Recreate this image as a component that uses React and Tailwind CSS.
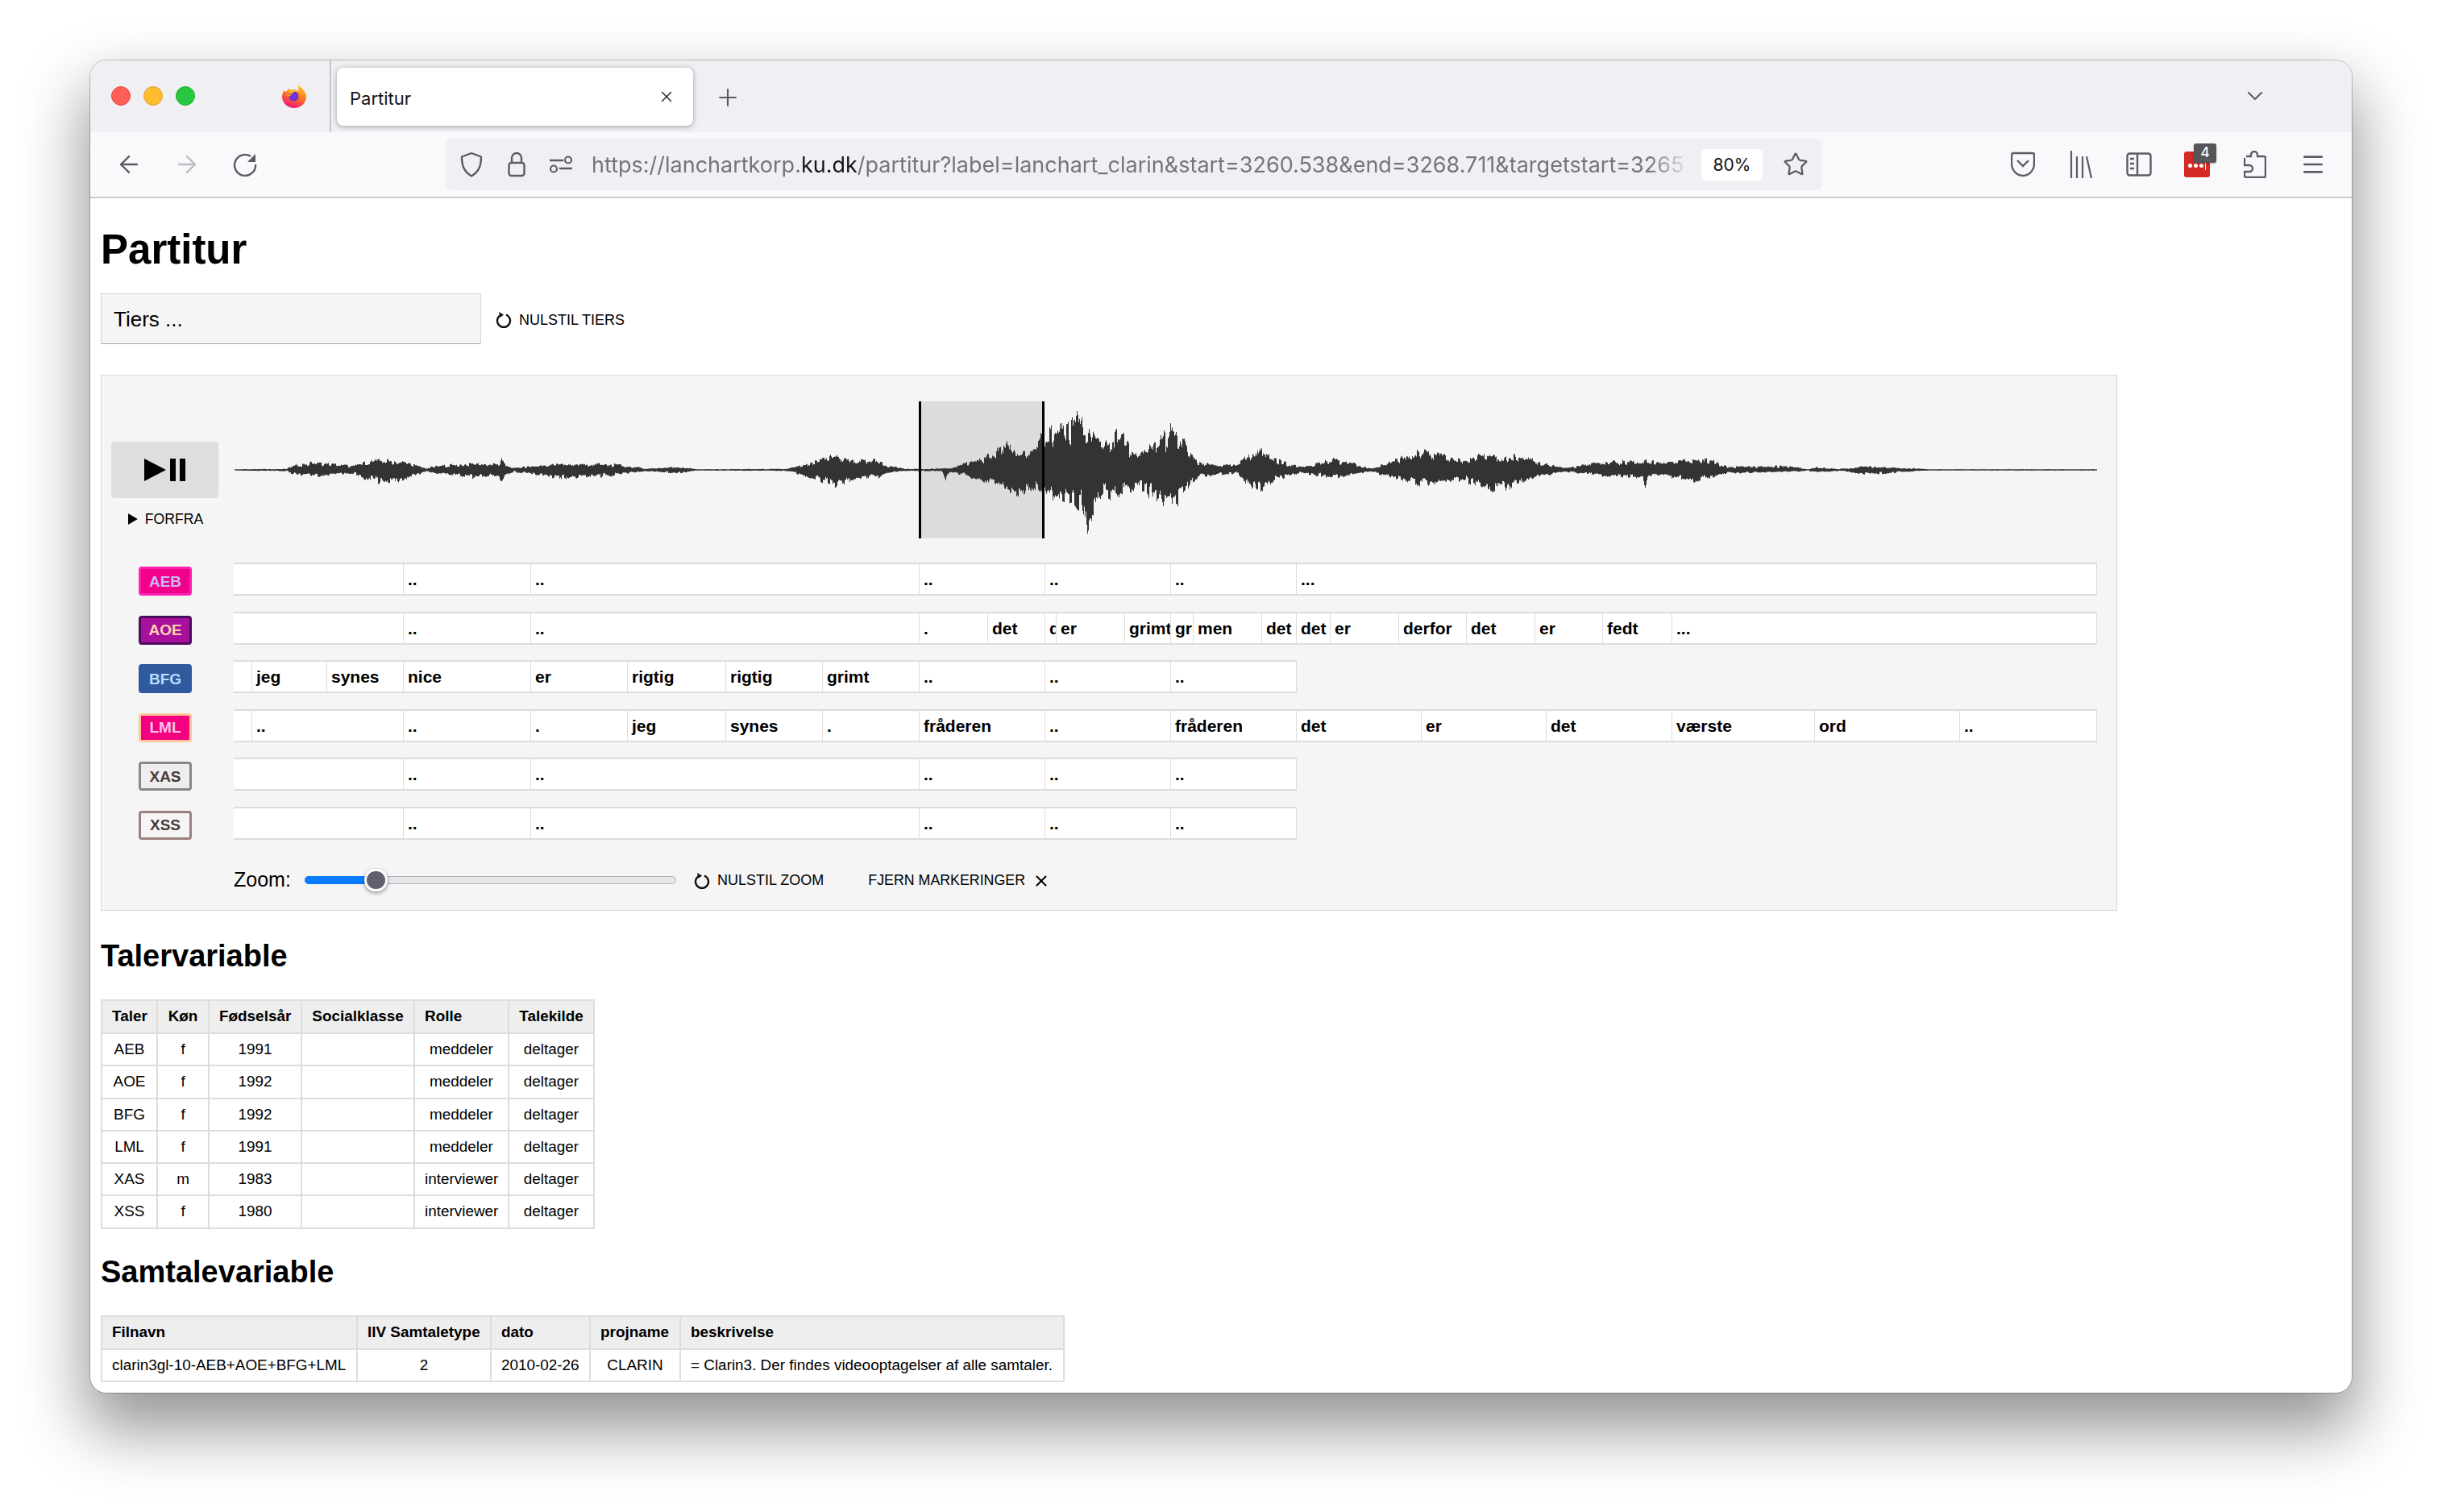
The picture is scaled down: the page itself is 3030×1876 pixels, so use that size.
import {
  Plus,
  X,
  ChevronDown,
  ArrowLeft,
  ArrowRight,
  Star,
  Menu,
} from "lucide-react";

const ARIAL = "font-['Liberation_Sans',Arial,sans-serif]";
const UI = "font-['Inter',sans-serif]";

// [x, top amplitude, bottom amplitude]
const ENVELOPE = [
  [291, 1, 1], [355, 1.5, 2], [362, 6, 6], [388, 12, 10], [439, 6, 6], [458, 14, 16], [477, 15, 19],
  [503, 12, 15], [528, 2.5, 2.5], [541, 6, 6], [585, 10, 12], [618, 9, 9], [622, 17, 18], [626, 8, 8],
  [637, 3, 3], [688, 9, 12], [739, 9, 12], [767, 8, 7], [802, 2, 2], [841, 5, 5], [866, 1, 1],
  [974, 1.5, 1.5], [1000, 8, 10], [1038, 24, 25], [1057, 14, 14], [1089, 16, 12], [1100, 6, 5],
  [1125, 1.5, 1.5], [1168, 2, 2], [1173, 3, 15], [1178, 3, 4], [1196, 10, 8], [1227, 22, 22],
  [1247, 40, 30], [1259, 30, 42], [1285, 30, 30], [1294, 60, 35], [1304, 65, 45], [1342, 75, 55],
  [1349, 60, 83], [1368, 45, 40], [1390, 55, 40], [1412, 20, 25], [1451, 62, 62], [1470, 40, 35],
  [1486, 10, 10], [1534, 7, 5], [1558, 35, 33], [1585, 15, 15], [1610, 5, 5], [1658, 17, 12],
  [1700, 2, 2], [1715, 8, 8], [1754, 28, 20], [1779, 25, 23], [1814, 15, 15], [1852, 27, 35],
  [1903, 14, 12], [1942, 3, 3], [1993, 13, 10], [2038, 13, 12], [2041, 14, 30], [2044, 13, 10],
  [2050, 13, 8], [2105, 15, 17], [2121, 15, 13], [2143, 5, 5], [2217, 6, 4], [2243, 1, 1],
  [2252, 4, 4], [2283, 1.5, 1.5], [2319, 6, 7], [2377, 2, 2], [2395, 1, 1], [2601, 1, 1],
];

const rand = (i) => {
  const s = Math.sin(i * 12.9898) * 43758.5453;
  return s - Math.floor(s);
};

const amplitude = (x, index) => {
  const k = ENVELOPE.findIndex((p) => p[0] > x);
  if (k <= 0) return 1;
  const a = ENVELOPE[k - 1];
  const b = ENVELOPE[k];
  const t = (x - a[0]) / (b[0] - a[0]);
  return a[index] + (b[index] - a[index]) * t;
};

const jagged = (x) => 0.38 + 0.62 * (0.72 * rand(Math.floor(x / 3)) + 0.28 * rand(x));

// waveform columns in a 2312 x 170 box, x starts at 290
const wavePath = () => {
  let d = "";
  for (let x = 291; x <= 2601; x++) {
    const top = amplitude(x, 1) * jagged(x);
    const bottom = amplitude(x, 2) * jagged(x + 5003);
    d += `M${x - 290 + 0.5} ${(85 - Math.max(top, 0.7)).toFixed(1)}V${(85 + Math.max(bottom, 0.7)).toFixed(1)}`;
  }
  return d;
};

const TIERS = [
  {
    name: "AEB",
    badge: "bg-[#f2008a] border-[#ff20b0] text-[#cdb8f5]",
    cuts: [290, 500, 658, 1140, 1296, 1452, 1608, 2602],
    words: ["", "..", "..", "..", "..", "..", "..."],
  },
  {
    name: "AOE",
    badge: "bg-[#a80f9c] border-[#4b0b5e] text-[#ffd0b0]",
    cuts: [290, 500, 658, 1140, 1225, 1296, 1310, 1395, 1452, 1480, 1565, 1608, 1650, 1735, 1819, 1904, 1988, 2074, 2602],
    words: ["", "..", "..", ".", "det", "det", "er", "grimt", "grimt", "men", "det", "det", "er", "derfor", "det", "er", "fedt", "..."],
  },
  {
    name: "BFG",
    badge: "bg-[#2f5a9e] border-[#2f5a9e] text-[#bcdcff]",
    cuts: [290, 312, 405, 500, 658, 778, 900, 1020, 1140, 1296, 1452, 1609],
    words: ["", "jeg", "synes", "nice", "er", "rigtig", "rigtig", "grimt", "..", "..", ".."],
  },
  {
    name: "LML",
    badge: "bg-[#f2007f] border-[#ffc79a] text-[#ffc4ea]",
    cuts: [290, 312, 500, 658, 778, 900, 1020, 1140, 1296, 1452, 1608, 1763, 1918, 2074, 2251, 2431, 2602],
    words: ["", "..", "..", ".", "jeg", "synes", ".", "fråderen", "..", "fråderen", "det", "er", "det", "værste", "ord", ".."],
  },
  {
    name: "XAS",
    badge: "bg-[#eeeeee] border-[#888888] text-[#4a3a3a]",
    cuts: [290, 500, 658, 1140, 1296, 1452, 1609],
    words: ["", "..", "..", "..", "..", ".."],
  },
  {
    name: "XSS",
    badge: "bg-[#f5f5f5] border-[#9a8080] text-[#4a3a3a]",
    cuts: [290, 500, 658, 1140, 1296, 1452, 1609],
    words: ["", "..", "..", "..", "..", ".."],
  },
];

const SPEAKER_COLS = ["w-[69px]", "w-[64px]", "w-[115px]", "w-[140px]", "w-[117px]", "w-[106px]"];
const SPEAKER_HEAD = ["Taler", "Køn", "Fødselsår", "Socialklasse", "Rolle", "Talekilde"];
const SPEAKERS = [
  ["AEB", "f", "1991", "", "meddeler", "deltager"],
  ["AOE", "f", "1992", "", "meddeler", "deltager"],
  ["BFG", "f", "1992", "", "meddeler", "deltager"],
  ["LML", "f", "1991", "", "meddeler", "deltager"],
  ["XAS", "m", "1983", "", "interviewer", "deltager"],
  ["XSS", "f", "1980", "", "interviewer", "deltager"],
];

const FILE_COLS = ["w-[317px]", "w-[166px]", "w-[123px]", "w-[112px]", "w-[476px]"];
const FILE_HEAD = ["Filnavn", "IIV Samtaletype", "dato", "projname", "beskrivelse"];
const FILE_ROW = ["clarin3gl-10-AEB+AOE+BFG+LML", "2", "2010-02-26", "CLARIN", "= Clarin3. Der findes videooptagelser af alle samtaler."];

function FirefoxLogo() {
  return (
    <svg width="32" height="32" viewBox="0 0 32 32">
      <defs>
        <linearGradient id="ffBody" x1="0.7" y1="0" x2="0.3" y2="1">
          <stop offset="0" stopColor="#ffcf2e" />
          <stop offset="0.45" stopColor="#ff7a1a" />
          <stop offset="1" stopColor="#f0127f" />
        </linearGradient>
        <radialGradient id="ffCore" cx="0.5" cy="0.5" r="0.6">
          <stop offset="0" stopColor="#7d3be0" />
          <stop offset="1" stopColor="#5a2bc4" />
        </radialGradient>
      </defs>
      <path d="M21 1c1 3 3 4 6 7 3 3 4 7 4 9 0 8-7 14-15 14S1 25 1 17c0-3 1-6 3-8 0 1 1 2 2 2 1-2 3-4 5-4-1 1-1 2-1 3 4-3 11-2 13 3 1 3-1 5-3 5 3-4 1-9 1-17z" fill="url(#ffBody)" />
      <circle cx="15.500" cy="16.500" r="6" fill="url(#ffCore)" />
      <path d="M8 10c3-2 9-2 12 1-3-1-5 0-6 2-2 1-5 0-6-3z" fill="#ffb325" />
      <path d="M5 13c3 1 6 2 8 1-1 2-3 3-6 2z" fill="#ff9a1f" />
    </svg>
  );
}

function ReloadSmall() {
  return (
    <svg width="20" height="22" viewBox="0 0 20 22" className="shrink-0">
      <path d="M7 4.500a8 8 0 1 0 6 0" fill="none" stroke="#111" strokeWidth="2.4" />
      <path d="M4 1l6 3.500L5.500 8z" fill="#111" />
    </svg>
  );
}

function ToolIcon({ children, className = "" }) {
  return <div className={`w-[72px] h-[40px] flex items-center justify-center shrink-0 ${className}`}>{children}</div>;
}

function TabBar() {
  return (
    <div className="h-[89px] bg-[#f0f0f4] flex items-stretch shrink-0">
      <div className="flex items-center gap-4 pl-[26px] pb-[2px]">
        <div className="w-6 h-6 rounded-full bg-[#ff5f57] border border-[#e0443e]" />
        <div className="w-6 h-6 rounded-full bg-[#febc2e] border border-[#dea123]" />
        <div className="w-6 h-6 rounded-full bg-[#28c840] border border-[#1aab29]" />
      </div>
      <div className="flex items-center ml-[107px] pb-[2px]">
        <FirefoxLogo />
      </div>
      <div className="w-[2px] bg-[#c8c8cb] ml-[28px]" />
      <div className="ml-[7px] mt-[9px] w-[442px] h-[72px] bg-white rounded-[8px] shadow-[0_1px_6px_rgba(0,0,0,0.35)] flex items-center pl-4 pr-[22px]">
        <span className={`${UI} text-[22px] text-[#15141a] pt-[4px]`}>Partitur</span>
        <X className="ml-auto text-[#2b2a33]" size={22} strokeWidth={1.6} />
      </div>
      <div className="ml-[21px] w-11 flex items-center justify-center pt-[2px]">
        <Plus size={34} strokeWidth={1.5} className="text-[#5b5b66]" />
      </div>
      <div className="ml-auto mr-[104px] flex items-center pb-[2px]">
        <ChevronDown size={32} strokeWidth={1.6} className="text-[#5b5b66]" />
      </div>
    </div>
  );
}

function ToolBar() {
  const ink = "#5b5b66";
  return (
    <div className="h-[82px] bg-[#f9f9fb] border-b-2 border-[#cccccc] flex items-start pt-[8px] shrink-0">
      <div className="flex pl-[12px] h-16 items-center">
        <ToolIcon><ArrowLeft size={34} strokeWidth={1.7} color={ink} /></ToolIcon>
        <ToolIcon><ArrowRight size={34} strokeWidth={1.7} color="#bdbdc2" /></ToolIcon>
        <ToolIcon>
          <svg width="30" height="30" viewBox="0 0 30 30">
            <path d="M22 5A13 13 0 1 0 28 15" fill="none" stroke={ink} strokeWidth="2.4" />
            <path d="M28 2v10H18z" fill={ink} />
          </svg>
        </ToolIcon>
      </div>
      <div className="ml-[213px] w-[1708px] h-16 bg-[#f0f0f4] rounded-[8px] flex items-center">
        <svg width="28" height="32" viewBox="0 0 28 32" className="ml-[18px] shrink-0">
          <path d="M14 2l12 4.500c0 10-2 18-12 24C4 24.500 2 16.500 2 6.500z" fill="none" stroke={ink} strokeWidth="2.4" strokeLinejoin="round" />
        </svg>
        <svg width="22" height="32" viewBox="0 0 22 32" className="ml-[31px] shrink-0">
          <path d="M5 14V8a6 6 0 0 1 12 0v6" fill="none" stroke={ink} strokeWidth="2.4" />
          <rect x="1.500" y="14" width="19" height="16" rx="3" fill="none" stroke={ink} strokeWidth="2.4" />
        </svg>
        <svg width="30" height="24" viewBox="0 0 30 24" className="ml-[29px] shrink-0">
          <path d="M1 7h17M13 17h16" stroke={ink} strokeWidth="2.6" />
          <circle cx="24" cy="6.500" r="4" fill="none" stroke={ink} strokeWidth="2.2" />
          <circle cx="6" cy="17.500" r="4" fill="none" stroke={ink} strokeWidth="2.2" />
        </svg>
        <div className={`${UI} ml-[23px] pt-[2px] w-[1365px] overflow-hidden whitespace-nowrap text-[27px] text-[#74747c] [mask-image:linear-gradient(to_right,black_96%,transparent)]`}>
          https://lanchartkorp.<span className="text-[#15141a]">ku.dk</span>/partitur?label=lanchart_clarin&amp;start=3260.538&amp;end=3268.711&amp;targetstart=3265
        </div>
        <div className={`${UI} ml-[12px] w-[76px] h-[39px] pt-[1px] bg-white rounded-[6px] flex items-center justify-center text-[21px] text-[#15141a]`}>80%</div>
        <Star size={32} strokeWidth={1.7} color={ink} className="ml-[25px]" />
      </div>
      <div className="ml-[213px] flex h-16 items-center">
        <ToolIcon>
          <svg width="30" height="32" viewBox="0 0 30 32">
            <path d="M3 2h24a2 2 0 0 1 2 2v11c0 8-6 15-14 15S1 23 1 15V4a2 2 0 0 1 2-2z" fill="none" stroke={ink} strokeWidth="2.4" />
            <path d="M8 11l7 7 7-7" fill="none" stroke={ink} strokeWidth="2.4" />
          </svg>
        </ToolIcon>
        <ToolIcon>
          <svg width="28" height="36" viewBox="0 0 28 36">
            <path d="M2 1v34M9 8v27M16 8v27M21 8l6 27" stroke={ink} strokeWidth="2.2" fill="none" />
          </svg>
        </ToolIcon>
        <ToolIcon>
          <svg width="32" height="30" viewBox="0 0 32 30">
            <rect x="1.500" y="1.500" width="29" height="27" rx="3" fill="none" stroke={ink} strokeWidth="2.4" />
            <path d="M14 1.500v27" stroke={ink} strokeWidth="2.4" />
            <path d="M5 8h5M5 14h5M5 20h5" stroke={ink} strokeWidth="2.4" />
          </svg>
        </ToolIcon>
        <ToolIcon className="relative">
          <div className="w-8 h-8 rounded-[3px] bg-[#d32a25] flex items-center justify-center gap-[2px] pt-[2px]">
            <span className="w-[5px] h-[5px] rounded-full bg-white" />
            <span className="w-[5px] h-[5px] rounded-full bg-white" />
            <span className="w-[5px] h-[5px] rounded-full bg-white" />
            <span className="w-[1px] h-3 bg-white" />
          </div>
          <div className={`${UI} absolute left-[32px] top-[-6px] w-7 h-6 rounded-[3px] bg-[#55555a] text-white text-[17px] font-medium flex items-center justify-center shadow-[0_1px_2px_rgba(0,0,0,0.3)]`}>4</div>
        </ToolIcon>
        <ToolIcon>
          <svg width="28" height="34" viewBox="0 0 28 34">
            <path d="M3 7h6V5a4 4 0 0 1 8 0v2h8a2 2 0 0 1 2 2v22a2 2 0 0 1-2 2H3a2 2 0 0 1-2-2v-5h6a4 4 0 0 0 0-8H1V9" fill="none" stroke={ink} strokeWidth="2.4" />
          </svg>
        </ToolIcon>
        <ToolIcon><Menu size={32} strokeWidth={2} color={ink} /></ToolIcon>
      </div>
    </div>
  );
}

function TierRow({ tier }) {
  const cuts = tier.cuts;
  const total = cuts[cuts.length - 1] - cuts[0];
  return (
    <div className="flex items-stretch h-[41px]">
      <div className="w-[164px] shrink-0 flex items-end pl-[46px]">
        <div className={`${tier.badge} w-[66px] h-9 border-[3px] rounded-[4px] flex items-center justify-center text-[19px] font-bold leading-none`}>
          {tier.name}
        </div>
      </div>
      <div className="flex bg-white border-y-2 border-[#dcdcdc] border-r" style={{ width: total }}>
        {tier.words.map((word, i) => (
          <div
            key={i}
            style={{ width: cuts[i + 1] - cuts[i] + (i === 0 ? 1 : 0) }}
            className="shrink-0 overflow-hidden whitespace-nowrap border-r border-[#dddddd] last:border-r-0 pl-[5px] text-[21px] font-bold leading-[38px] text-black"
          >
            {word}
          </div>
        ))}
      </div>
    </div>
  );
}

function Panel() {
  return (
    <div className="mt-[38px] w-[2502px] h-[665px] bg-[#f5f5f5] border border-[#d8d8d8] pt-[32px] shrink-0">
      <div className="flex h-[170px]">
        <div className="w-[164px] shrink-0 pl-[12px] pt-[50px]">
          <div className="w-[133px] h-[70px] bg-[#dedede] rounded-[4px] flex items-center justify-center gap-[5px]">
            <div className="w-[27px] h-[28px] bg-black [clip-path:polygon(0_0,100%_50%,0_100%)]" />
            <div className="w-[7px] h-[28px] bg-black" />
            <div className="w-[7px] h-[28px] bg-black" />
          </div>
          <div className="w-[135px] mt-[16px] flex items-center justify-center gap-[9px] text-[17.600px] leading-[20px] text-black">
            <span className="w-[12px] h-[14px] bg-black [clip-path:polygon(0_0,100%_50%,0_100%)]" />
            FORFRA
          </div>
        </div>
        <div className="relative w-[2312px] h-[170px]">
          <div className="absolute left-[850px] top-0 w-[156px] h-[170px] bg-[#dcdcdc] border-x-[3px] border-black" />
          <svg width="2312" height="170" viewBox="0 0 2312 170" className="absolute inset-0">
            <path d={wavePath()} stroke="#333333" strokeWidth="1" fill="none" />
          </svg>
          <div className="absolute left-[850px] top-0 w-[156px] h-[170px] border-x-[3px] border-black" />
        </div>
      </div>
      <div className="mt-[30px] flex flex-col gap-[19.500px]">
        {TIERS.map((tier) => (
          <TierRow key={tier.name} tier={tier} />
        ))}
      </div>
      <div className="mt-[30px] flex items-center h-10 pl-[164px] text-black">
        <span className="text-[25px] w-[88px]">Zoom:</span>
        <div className="relative w-[461px] h-[10px] rounded-full bg-[#e6e6eb] border border-[#b4b4bb]">
          <div className="absolute left-[-1px] top-[-1px] w-[88px] h-[10px] rounded-l-full bg-[#0a7cff]" />
          <div className="absolute left-[73px] top-[-10px] w-[29px] h-[28px] rounded-full bg-[#5f5f6e] border-[3px] border-white shadow-[0_2px_5px_rgba(0,0,0,0.4)]" />
        </div>
        <div className="ml-[22px] pt-[2px] flex items-center gap-[9px] text-[18px]">
          <ReloadSmall />
          NULSTIL ZOOM
        </div>
        <div className="ml-[55px] pt-[2px] flex items-center gap-[9px] text-[17.800px]">
          FJERN MARKERINGER
          <X size={22} strokeWidth={2.2} />
        </div>
      </div>
    </div>
  );
}

function DataTable({ cols, head, rows, width, aligns, headAligns, rowHeights }) {
  return (
    <table className={`table-fixed border-collapse text-[18.900px] text-black ${width}`}>
      <colgroup>
        {cols.map((c, i) => (
          <col key={i} className={c} />
        ))}
      </colgroup>
      <thead>
        <tr className="bg-[#eeeeee] h-[41px]">
          {head.map((h, i) => (
            <th key={i} className={`border-2 border-[#dddddd] font-bold whitespace-nowrap px-[12px] py-0 ${headAligns[i]}`}>
              {h}
            </th>
          ))}
        </tr>
      </thead>
      <tbody>
        {rows.map((row, r) => (
          <tr key={r} className={rowHeights}>
            {row.map((cell, i) => (
              <td key={i} className={`border-2 border-[#dddddd] whitespace-nowrap px-[12px] py-0 ${aligns[i]}`}>
                {cell}
              </td>
            ))}
          </tr>
        ))}
      </tbody>
    </table>
  );
}

export default function App() {
  return (
    <div className={`${ARIAL} w-[3030px] h-[1876px] bg-white pt-[75px] pl-[112px] overflow-hidden`}>
      <div className="w-[2806px] h-[1653px] rounded-[20px] bg-white overflow-hidden flex flex-col shadow-[0_0_0_1px_rgba(0,0,0,0.22),0_40px_80px_6px_rgba(0,0,0,0.42)]">
        <TabBar />
        <ToolBar />
        <div className="flex flex-col items-start pl-[13px]">
          <h1 className="mt-[34px] h-[60px] text-[51px] leading-[60px] font-bold text-black">Partitur</h1>
          <div className="mt-[24px] flex items-center">
            <div className="w-[472px] h-[63px] bg-[#f5f5f5] border border-[#d4d4d4] border-b-[#aaaaaa] pl-[15px] pt-[2px] flex items-center text-[26px] text-black">
              Tiers ...
            </div>
            <div className="ml-[18px] pt-[3px] flex items-center gap-[9px] text-[18px] text-black">
              <ReloadSmall />
              NULSTIL TIERS
            </div>
          </div>
          <Panel />
          <h2 className="mt-[33px] h-[46px] text-[38px] leading-[46px] font-bold text-black">Talervariable</h2>
          <div className="mt-[31px]">
            <DataTable
              cols={SPEAKER_COLS}
              head={SPEAKER_HEAD}
              rows={SPEAKERS}
              width="w-[611px]"
              headAligns={["text-center", "text-center", "text-center", "text-center", "text-left", "text-center"]}
              aligns={["text-center", "text-center", "text-center", "text-center", "text-center", "text-center"]}
              rowHeights="h-[40.300px]"
            />
          </div>
          <h2 className="mt-[30px] h-[46px] text-[38px] leading-[46px] font-bold text-black">Samtalevariable</h2>
          <div className="mt-[31px]">
            <DataTable
              cols={FILE_COLS}
              head={FILE_HEAD}
              rows={[FILE_ROW]}
              width="w-[1194px]"
              headAligns={["text-left", "text-left", "text-left", "text-left", "text-left"]}
              aligns={["text-left", "text-center", "text-left", "text-center", "text-left"]}
              rowHeights="h-[40px]"
            />
          </div>
        </div>
      </div>
    </div>
  );
}
